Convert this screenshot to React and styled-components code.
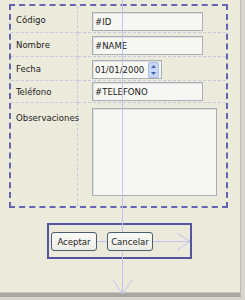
import React from 'react';
import styled, { createGlobalStyle } from 'styled-components';

const GlobalStyle = createGlobalStyle`
  html, body {
    margin: 0;
    padding: 0;
    background: #d8d8d0;
  }
  body {
    font-family: "DejaVu Sans Condensed", "Liberation Sans", sans-serif;
    font-size: 9.5px;
    color: #1c1c1c;
  }
`;

const Page = styled.div`
  width: 245px;
  height: 300px;
  overflow: hidden;
  background: #d6d6ce;
`;

const Panel = styled.div`
  position: relative;
  box-sizing: border-box;
  width: 241px;
  height: 297px;
  padding: 4px 0 0 9px;
  background: #ebeadb;
  border-right: 1px solid #bcbcb4;
  border-bottom: 4px solid #a9a9a2;
  box-shadow: inset 0 -1px 0 #c8c8c0;
`;

const Form = styled.div`
  box-sizing: border-box;
  width: 219px;
  height: 204px;
  display: grid;
  grid-template-columns: 67px 1fr;
  grid-template-rows: 27px 24px 24px 22px 1fr;
  border: 2px dashed #6464b2;
`;

const Label = styled.div`
  display: flex;
  align-items: ${(p) => (p.$top ? 'flex-start' : 'center')};
  padding: ${(p) => (p.$top ? '9px 0 0 5px' : '0 0 0 5px')};
  border-right: 1px dashed #c8c8e0;
  border-bottom: ${(p) => (p.$last ? 'none' : '1px dashed #c8c8e0')};
`;

const Cell = styled.div`
  display: flex;
  align-items: ${(p) => (p.$top ? 'flex-start' : 'flex-end')};
  padding: ${(p) => (p.$top ? '5px 0 0 14px' : '0 0 1px 14px')};
  border-bottom: ${(p) => (p.$last ? 'none' : '1px dashed #c8c8e0')};
`;

const Field = styled.div`
  box-sizing: border-box;
  width: ${(p) => p.$w || 111}px;
  height: ${(p) => p.$h || 19}px;
  display: flex;
  align-items: center;
  justify-content: space-between;
  padding: 0 1px 0 2px;
  background: #f6f6f2;
  border: 1px solid #a8adb8;
  box-shadow: inset 1px 1px 0 #e2e2dc;
`;

const Spin = styled.div`
  display: flex;
  flex-direction: column;
  width: 9px;
  height: 14px;
  margin-right: 1px;
  border-radius: 2px;
  background: #c9d7f4;
  border: 1px solid #aabde6;
  svg {
    display: block;
  }
`;

const ButtonBar = styled.div`
  box-sizing: border-box;
  display: flex;
  align-items: center;
  gap: 10px;
  width: 145px;
  height: 36px;
  margin: 15px 0 0 38px;
  padding: 1px 0 0 2px;
  border: 2px solid #5454a0;
`;

const Button = styled.div`
  box-sizing: border-box;
  width: 46px;
  height: 19px;
  display: flex;
  align-items: center;
  justify-content: center;
  border: 1px solid #4a5e6e;
  border-radius: 3px;
  background: linear-gradient(#fbfbf8, #ecebe4);
`;

const Guides = styled.svg`
  position: absolute;
  left: 0;
  top: 0;
  pointer-events: none;
`;

const SpinArrows = () => (
  <Spin>
    <svg width="9" height="7" viewBox="0 0 9 7">
      <path d="M2 5 L4.5 2 L7 5 Z" fill="#3f63b0" />
    </svg>
    <svg width="9" height="7" viewBox="0 0 9 7">
      <path d="M2 2 L4.5 5 L7 2 Z" fill="#3f63b0" />
    </svg>
  </Spin>
);

export default function App() {
  return (
    <Page>
      <GlobalStyle />
      <Panel>
        <Form>
          <Label>Código</Label>
          <Cell>
            <Field>#ID</Field>
          </Cell>
          <Label>Nombre</Label>
          <Cell>
            <Field>#NAME</Field>
          </Cell>
          <Label>Fecha</Label>
          <Cell>
            <Field $w={70}>
              01/01/2000
              <SpinArrows />
            </Field>
          </Cell>
          <Label>Teléfono</Label>
          <Cell>
            <Field>#TELEFONO</Field>
          </Cell>
          <Label $top $last>Observaciones</Label>
          <Cell $top $last>
            <Field $w={125} $h={88} />
          </Cell>
        </Form>
        <ButtonBar>
          <Button>Aceptar</Button>
          <Button>Cancelar</Button>
        </ButtonBar>
        <Guides width="241" height="294" viewBox="0 0 241 294">
          <g stroke="#c2c2ee" strokeWidth="1" fill="none">
            <line x1="122.5" y1="0" x2="122.5" y2="232" />
            <line x1="122.5" y1="252" x2="122.5" y2="294" />
            <line x1="49" y1="241.5" x2="51" y2="241.5" />
            <line x1="97" y1="241.5" x2="107" y2="241.5" />
            <line x1="153" y1="241.5" x2="190" y2="241.5" />
            <polyline points="177,233 190,241.5 177,250" />
            <polyline points="113,280 122.5,294 132,280" />
          </g>
        </Guides>
      </Panel>
    </Page>
  );
}
